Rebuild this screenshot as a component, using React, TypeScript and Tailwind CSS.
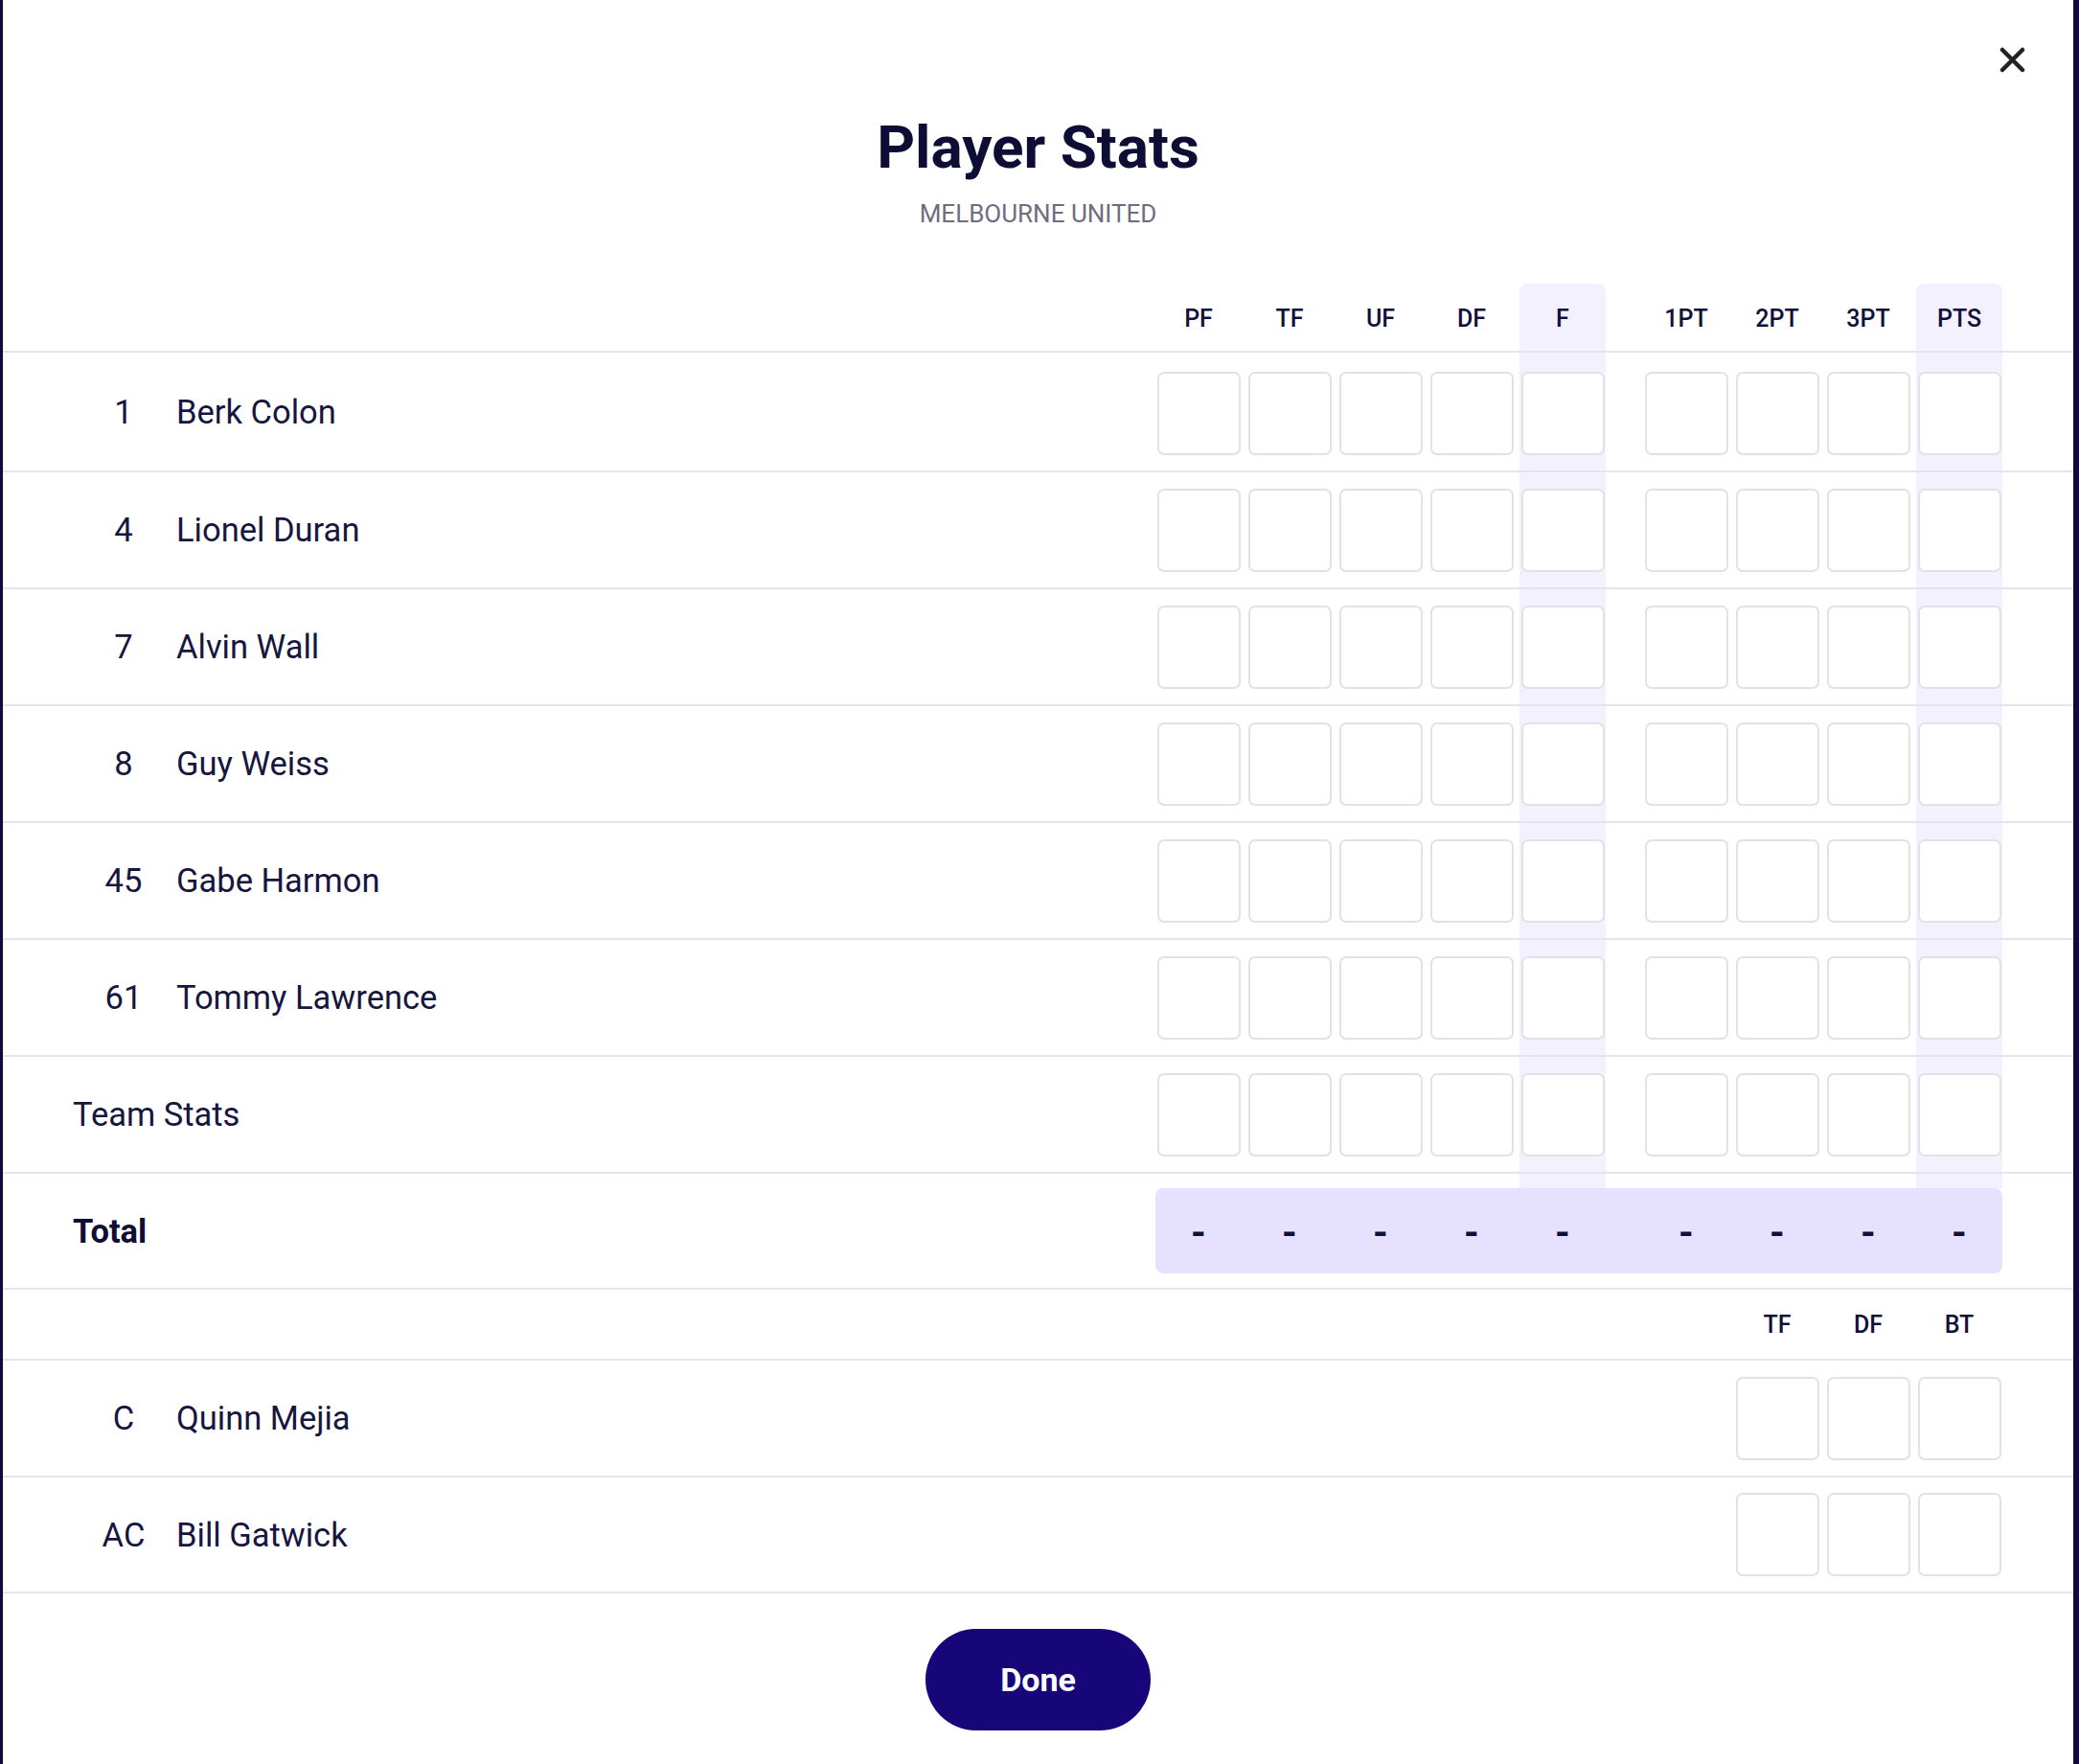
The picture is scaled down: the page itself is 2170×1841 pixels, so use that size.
import React from 'react';
import clsx from 'clsx';

const STAT_COLS = ['PF', 'TF', 'UF', 'DF', 'F', '1PT', '2PT', '3PT', 'PTS'];
const HIGHLIGHT = ['F', 'PTS'];

const PLAYERS = [
  { no: '1', name: 'Berk Colon' },
  { no: '4', name: 'Lionel Duran' },
  { no: '7', name: 'Alvin Wall' },
  { no: '8', name: 'Guy Weiss' },
  { no: '45', name: 'Gabe Harmon' },
  { no: '61', name: 'Tommy Lawrence' },
];

const COACHES = [
  { role: 'C', name: 'Quinn Mejia' },
  { role: 'AC', name: 'Bill Gatwick' },
];

// last three slots line up with 2PT / 3PT / PTS
const COACH_COLS = [null, null, null, null, null, null, 'TF', 'DF', 'BT'];

const font = { fontFamily: 'Roboto, "Noto Sans", sans-serif' };

const StatInput = () => (
  <input
    type="text"
    className="w-[87px] h-[87px] rounded-[7px] border-2 border-[#dfe2e7] bg-white outline-none"
  />
);

interface CellProps {
  index: number;
  highlight?: boolean;
  children?: React.ReactNode;
  className?: string;
}

const Cell: React.FC<CellProps> = ({ index, highlight, children, className }) => (
  <div
    className={clsx(
      'w-[90px] flex items-center justify-center',
      index === 5 && 'ml-[34px]',
      highlight && 'bg-[#f3f1fe]',
      className
    )}
  >
    {children}
  </div>
);

const RowLabel: React.FC<{ no?: string; name: string; bold?: boolean }> = ({ no, name, bold }) => (
  <div className="flex-1 flex items-center pl-[73px] pt-[2px] text-[34.5px] text-[#171640]">
    {no !== undefined ? (
      <>
        <span className="w-[108px] pr-[2px] text-center">{no}</span>
        <span>{name}</span>
      </>
    ) : (
      <span className={clsx(bold && 'font-bold text-[#0e0d35]')}>{name}</span>
    )}
  </div>
);

export default function App() {
  return (
    <div className="min-h-screen bg-[#100a40] pl-[3px] pr-[6px]" style={font}>
      <div className="bg-white min-h-screen flex flex-col">
        {/* Heading */}
        <div className="relative h-[296px] flex flex-col items-center pt-[124px]">
          <button className="absolute top-[49px] right-[50px] w-[27px] h-[27px]" aria-label="Close">
            <svg width="27" height="27" viewBox="0 0 27 27" fill="none">
              <path d="M3 3L24 24M24 3L3 24" stroke="#222222" strokeWidth="4.5" strokeLinecap="round" />
            </svg>
          </button>
          <h1 className="text-[62px] leading-[60px] font-bold text-[#0e0d35]">Player Stats</h1>
          <p className="mt-[26px] text-[26px] leading-[26px] text-[#6e6d80]">MELBOURNE UNITED</p>
        </div>

        {/* Column headers */}
        <div className="flex border-b-2 border-[#e2e5ea]">
          <div className="flex-1" />
          <div className="flex gap-[5px] pr-[74px]">
            {STAT_COLS.map((col, i) => (
              <Cell
                key={col}
                index={i}
                highlight={HIGHLIGHT.includes(col)}
                className={clsx('h-[70px] pt-[4px]', HIGHLIGHT.includes(col) && 'rounded-t-[8px]')}
              >
                <span className="text-[25px] font-medium text-[#10103a]">{col}</span>
              </Cell>
            ))}
          </div>
        </div>

        {/* Player rows */}
        {PLAYERS.map((p, r) => (
          <div key={p.no} className="flex border-b-2 border-[#e2e5ea]">
            <RowLabel no={p.no} name={p.name} />
            <div className="flex gap-[5px] pr-[74px]">
              {STAT_COLS.map((col, i) => (
                <Cell
                  key={col}
                  index={i}
                  highlight={HIGHLIGHT.includes(col)}
                  className={r === 0 ? 'h-[123px] pt-[3px]' : 'h-[120px]'}
                >
                  <StatInput />
                </Cell>
              ))}
            </div>
          </div>
        ))}

        {/* Team stats */}
        <div className="flex border-b-2 border-[#e2e5ea]">
          <RowLabel name="Team Stats" />
          <div className="flex gap-[5px] pr-[74px]">
            {STAT_COLS.map((col, i) => (
              <Cell key={col} index={i} highlight={HIGHLIGHT.includes(col)} className="h-[120px]">
                <StatInput />
              </Cell>
            ))}
          </div>
        </div>

        {/* Total */}
        <div className="flex border-b-2 border-[#e2e5ea]">
          <RowLabel name="Total" bold />
          <div className="flex flex-col pr-[74px] h-[119px]">
            <div className="flex gap-[5px] h-[15px]">
              {STAT_COLS.map((col, i) => (
                <Cell key={col} index={i} highlight={HIGHLIGHT.includes(col)} />
              ))}
            </div>
            <div className="flex gap-[5px] h-[89px] rounded-[8px] bg-[#e6e1fe]">
              {STAT_COLS.map((col, i) => (
                <Cell key={col} index={i} className="pt-[5px]">
                  <span className="text-[40px] font-bold text-[#10103a] leading-none">-</span>
                </Cell>
              ))}
            </div>
          </div>
        </div>

        {/* Coach headers */}
        <div className="flex border-b-2 border-[#e2e5ea]">
          <div className="flex-1" />
          <div className="flex gap-[5px] pr-[74px]">
            {COACH_COLS.map((col, i) => (
              <Cell key={i} index={i} className="h-[72px] pt-[2px]">
                {col && <span className="text-[25px] font-medium text-[#10103a]">{col}</span>}
              </Cell>
            ))}
          </div>
        </div>

        {/* Coach rows */}
        {COACHES.map((c) => (
          <div key={c.role} className="flex border-b-2 border-[#e2e5ea]">
            <RowLabel no={c.role} name={c.name} />
            <div className="flex gap-[5px] pr-[74px]">
              {COACH_COLS.map((col, i) => (
                <Cell key={i} index={i} className={c.role === 'AC' ? 'h-[119px]' : 'h-[120px]'}>
                  {col && <StatInput />}
                </Cell>
              ))}
            </div>
          </div>
        ))}

        {/* Footer */}
        <div className="flex justify-center pt-[37px] pb-[35px]">
          <button className="w-[235px] h-[106px] rounded-full bg-[#17067a] text-white text-[34px] font-bold">
            Done
          </button>
        </div>
      </div>
    </div>
  );
}
